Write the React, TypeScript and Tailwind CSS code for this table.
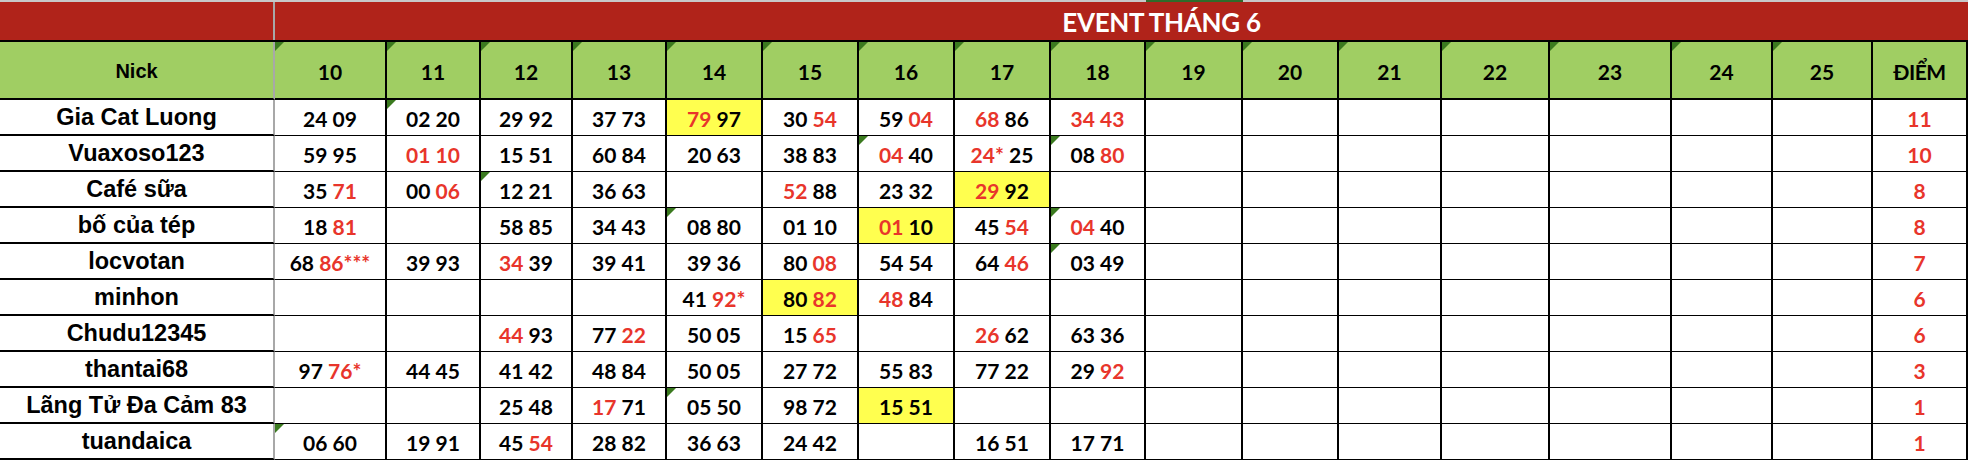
import React from "react";

const DAYS = ["10", "11", "12", "13", "14", "15", "16", "17", "18", "19", "20", "21", "22", "23", "24", "25"];

// "[..]" = red text, "!" prefix = yellow fill, "^" prefix = green corner mark
const ROWS: { nick: string; cells: string[]; score: string }[] = [
  { nick: "Gia Cat Luong", cells: ["24 09", "^02 20", "29 92", "37 73", "![79] 97", "30 [54]", "59 [04]", "[68] 86", "[34 43]"], score: "11" },
  { nick: "Vuaxoso123", cells: ["59 95", "[01 10]", "15 51", "60 84", "20 63", "38 83", "^[04] 40", "[24*] 25", "^08 [80]"], score: "10" },
  { nick: "Café sữa", cells: ["35 [71]", "00 [06]", "^12 21", "36 63", "", "[52] 88", "23 32", "![29] 92", ""], score: "8" },
  { nick: "bố của tép", cells: ["18 [81]", "", "58 85", "34 43", "^08 80", "01 10", "![01] 10", "45 [54]", "^[04] 40"], score: "8" },
  { nick: "locvotan", cells: ["68 [86***]", "39 93", "[34] 39", "39 41", "39 36", "80 [08]", "54 54", "64 [46]", "^03 49"], score: "7" },
  { nick: "minhon", cells: ["", "", "", "", "41 [92*]", "!80 [82]", "[48] 84", "", ""], score: "6" },
  { nick: "Chudu12345", cells: ["", "", "[44] 93", "77 [22]", "50 05", "15 [65]", "", "[26] 62", "63 36"], score: "6" },
  { nick: "thantai68", cells: ["97 [76*]", "44 45", "41 42", "48 84", "50 05", "27 72", "55 83", "77 22", "29 [92]"], score: "3" },
  { nick: "Lãng Tử Đa Cảm 83", cells: ["", "", "25 48", "[17] 71", "^05 50", "98 72", "!15 51", "", ""], score: "1" },
  { nick: "tuandaica", cells: ["^06 60", "19 91", "45 [54]", "28 82", "36 63", "24 42", "", "16 51", "17 71"], score: "1" },
];

// day columns + ĐIỂM, drawn on black with 2px gaps as grid lines
const GRID =
  "grid grid-cols-[110px_92px_90px_92px_94px_94px_94px_94px_93px_95px_94px_101px_106px_120px_99px_98px_93px] gap-x-[2px] bg-black pr-[2px] pb-[2px]";

const LATO = "font-['Lato','Open_Sans',sans-serif] font-bold";
const ARIAL = "font-['Liberation_Sans','Arial',sans-serif] font-bold";
const RED = "text-[#e8352b]";
const GREEN = "bg-[#a0ce63]";

function Mark() {
  return (
    <svg className="absolute left-0 top-0" width="9" height="9" viewBox="0 0 9 9">
      <polygon points="0,0 9,0 0,9" fill="#3b7a1f" />
    </svg>
  );
}

function NickCell({ children, bg = "bg-white" }: { children: React.ReactNode; bg?: string }) {
  return (
    <div
      className={`w-[275px] shrink-0 flex items-center justify-center pt-[2px] border-r-2 border-b-2 border-black border-r-[#a8a8a8] ${bg}`}
    >
      {children}
    </div>
  );
}

function DayCell({ raw }: { raw: string }) {
  let text = raw;
  let yellow = false;
  let mark = false;
  if (text.startsWith("^")) {
    mark = true;
    text = text.slice(1);
  }
  if (text.startsWith("!")) {
    yellow = true;
    text = text.slice(1);
  }
  const parts = text.split(/(\[[^\]]*\])/).filter(Boolean);
  return (
    <div className={`relative flex items-center justify-center pt-[3px] ${yellow ? "bg-[#ffff4f]" : "bg-white"}`}>
      {mark && <Mark />}
      <span className={`${LATO} text-[21px] text-black whitespace-pre`}>
        {parts.map((p, i) =>
          p.startsWith("[") ? (
            <span key={i} className={RED}>
              {p.slice(1, -1)}
            </span>
          ) : (
            <span key={i}>{p}</span>
          )
        )}
      </span>
    </div>
  );
}

export default function App() {
  return (
    <div className="w-[1968px] h-[460px] bg-white overflow-hidden">
      {/* sheet column strip */}
      <div className="flex h-[2px] bg-[#c8c8c8]">
        <div className="w-[1146px]" />
        <div className="w-[97px] bg-[#2f6b2a]" />
      </div>

      {/* title bar */}
      <div className="flex h-[40px] bg-[#b0231a] border-b-2 border-black">
        <div className="w-[275px] shrink-0 border-r-2 border-[#a8a8a8]" />
        <div className="flex-1 flex items-center justify-center pl-[80px] pt-[2px]">
          <span className={`${LATO} text-[26px] text-white tracking-[-0.3px]`}>EVENT THÁNG 6</span>
        </div>
      </div>

      {/* header */}
      <div className="flex h-[58px]">
        <NickCell bg={GREEN}>
          <span className={`${ARIAL} text-[20px] text-black`}>Nick</span>
        </NickCell>
        <div className={`${GRID} flex-1`}>
          {DAYS.map((d) => (
            <div key={d} className={`relative flex items-center justify-center pt-[3px] ${GREEN}`}>
              <Mark />
              <span className={`${LATO} text-[21px] text-black`}>{d}</span>
            </div>
          ))}
          <div className={`flex items-center justify-center pt-[3px] ${GREEN}`}>
            <span className={`${LATO} text-[21px] text-black tracking-[-0.5px]`}>ĐIỂM</span>
          </div>
        </div>
      </div>

      {/* rows */}
      {ROWS.map((r) => (
        <div key={r.nick} className="flex h-[36px]">
          <NickCell>
            <span className={`${ARIAL} text-[23.5px] text-black`}>{r.nick}</span>
          </NickCell>
          <div className={`${GRID} flex-1`}>
            {DAYS.map((d, i) => (
              <DayCell key={d} raw={r.cells[i] ?? ""} />
            ))}
            <div className="flex items-center justify-center pt-[3px] bg-white">
              <span className={`${LATO} text-[21px] ${RED}`}>{r.score}</span>
            </div>
          </div>
        </div>
      ))}
    </div>
  );
}
